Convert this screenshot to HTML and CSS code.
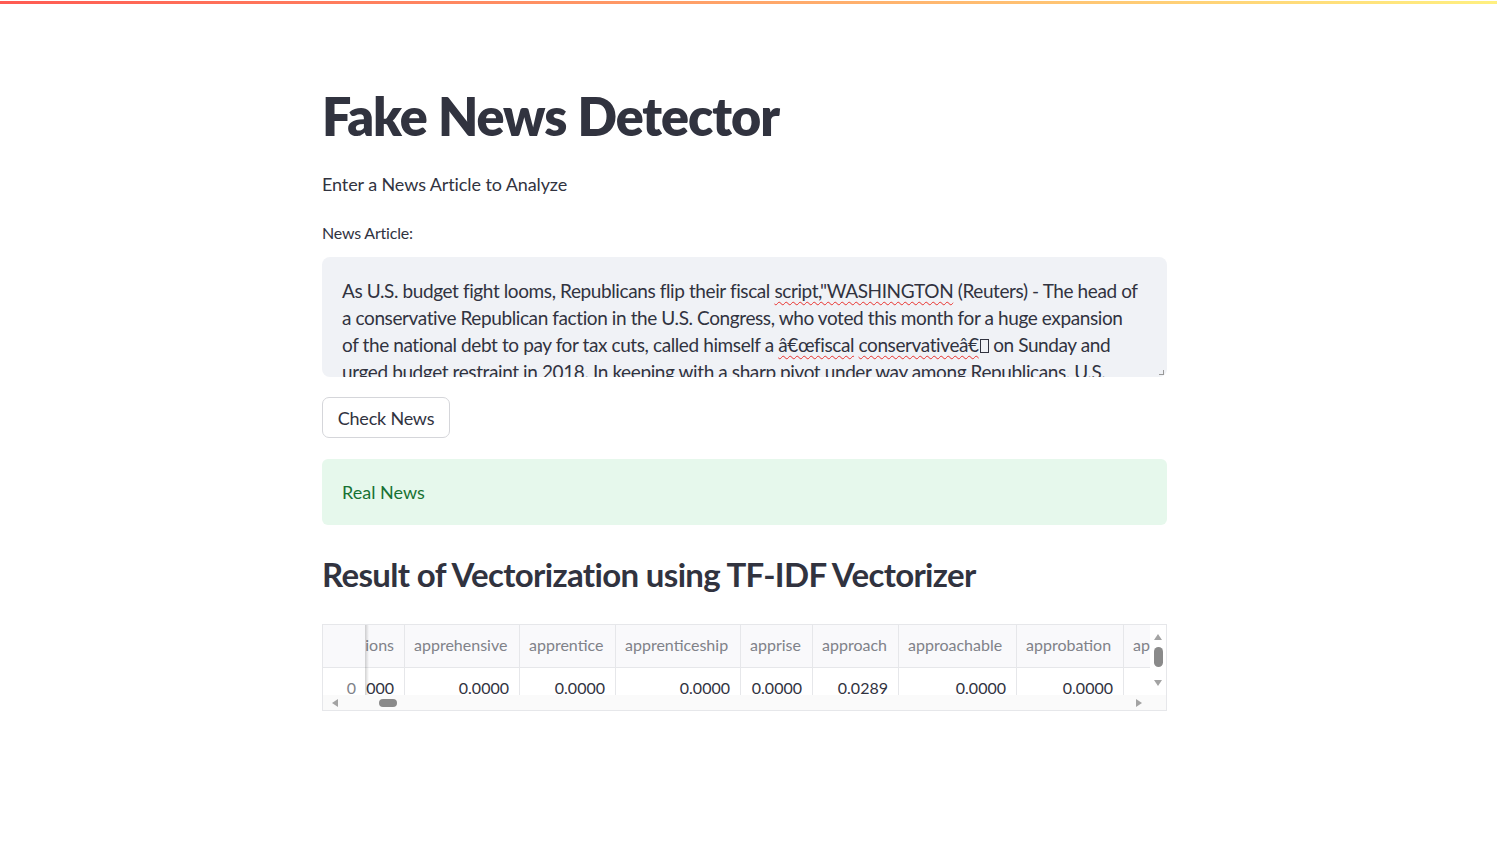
FILE: index.html
```html
<!DOCTYPE html>
<html lang="en">
<head>
<meta charset="utf-8">
<title>Fake News Detector</title>
<link rel="stylesheet" href="styles.css">
</head>
<body>
<div class="decoration"></div>
<main class="main">
  <h1 class="title">Fake News Detector</h1>
  <p class="subtitle">Enter a News Article to Analyze</p>
  <label class="label">News Article:</label>
  <div class="textarea">
    <div class="ta-text">As U.S. budget fight looms, Republicans flip their fiscal <span class="spell">script,"WASHINGTON</span> (Reuters) - The head of<br>a conservative Republican faction in the U.S. Congress, who voted this month for a huge expansion<br>of the national debt to pay for tax cuts, called himself a <span class="spell">â€œfiscal</span> <span class="spell">conservativeâ€</span><span class="missing">&#x9d;</span> on Sunday and<br>urged budget restraint in 2018. In keeping with a sharp pivot under way among Republicans, U.S.</div>
    <span class="resize"></span>
  </div>
  <div class="btn-row"><button class="btn">Check News</button></div>
  <div class="alert">Real News</div>
  <h2 class="h2">Result of Vectorization using TF-IDF Vectorizer</h2>
  <div class="grid">
    <div class="grid-body">
      <div class="row head">
        <div class="cell idx"></div>
        <div class="cell partial"><span>apprehensions</span></div>
        <div class="cell w1">apprehensive</div>
        <div class="cell w2">apprentice</div>
        <div class="cell w3">apprenticeship</div>
        <div class="cell w4">apprise</div>
        <div class="cell w5">approach</div>
        <div class="cell w6">approachable</div>
        <div class="cell w7">approbation</div>
        <div class="cell w8">approval</div>
      </div>
      <div class="row data">
        <div class="cell idx">0</div>
        <div class="cell partial num"><span>0.0000</span></div>
        <div class="cell w1 num">0.0000</div>
        <div class="cell w2 num">0.0000</div>
        <div class="cell w3 num">0.0000</div>
        <div class="cell w4 num">0.0000</div>
        <div class="cell w5 num">0.0289</div>
        <div class="cell w6 num">0.0000</div>
        <div class="cell w7 num">0.0000</div>
        <div class="cell w8 num">0.0000</div>
      </div>
      <div class="shadow"></div>
      <div class="vscroll">
        <span class="arrow up"></span>
        <span class="vthumb"></span>
        <span class="arrow down"></span>
      </div>
    </div>
    <div class="hscroll">
      <span class="arrow left"></span>
      <span class="hthumb"></span>
      <span class="hspace"></span>
      <span class="arrow right"></span>
    </div>
  </div>
</main>
</body>
</html>
```
FILE: styles.css
```css
* { box-sizing: border-box; }
html, body { margin: 0; padding: 0; background: #ffffff; }
body {
  font-family: Lato, "Noto Sans", sans-serif;
  color: #31333f;
  width: 1497px;
  height: 842px;
  overflow: hidden;
}
.decoration {
  height: 3px;
  margin-top: 1px;
  background: linear-gradient(90deg, #ff5a52, #ffb46e 60%, #fff080);
}
.main {
  width: 845px;
  margin-left: calc(50% - 426.5px);
  display: flex;
  flex-direction: column;
}
.title {
  margin: 77px 0 0;
  font-size: 52px;
  font-weight: 800;
  line-height: 70px;
  letter-spacing: -1px;
  color: #31333f;
}
.subtitle {
  margin: 20px 0 0;
  font-size: 18px;
  line-height: 26px;
  letter-spacing: -0.1px;
}
.label {
  margin-top: 26px;
  font-size: 16px;
  line-height: 20px;
  letter-spacing: -0.2px;
}
.textarea {
  position: relative;
  margin-top: 14px;
  height: 120px;
  background: #f0f2f6;
  border-radius: 8px;
  padding: 20px 20px 0;
  overflow: hidden;
}
.ta-text {
  font-size: 19px;
  line-height: 27px;
  white-space: nowrap;
  letter-spacing: -0.4px;
}
.spell {
  text-decoration: underline wavy #e8302c;
  text-decoration-thickness: 1px;
  text-underline-offset: 3px;
}
.missing {
  display: inline-block;
  width: 9px;
  height: 14px;
  overflow: hidden;
  border: 1px solid #31333f;
  vertical-align: -1px;
  margin-left: 1px;
  font-size: 8px;
  line-height: 12px;
}
.resize {
  position: absolute;
  right: 3px;
  bottom: 2px;
  width: 5px;
  height: 5px;
  border-right: 1px solid #999;
  border-bottom: 1px solid #999;
}
.btn-row { margin-top: 20px; display: flex; }
.btn {
  height: 41px;
  width: 128px;
  background: #ffffff;
  border: 1px solid #d5d6da;
  border-radius: 7px;
  font-family: inherit;
  font-size: 18px;
  letter-spacing: -0.2px;
  color: #31333f;
  padding: 0;
}
.alert {
  margin-top: 21px;
  height: 66px;
  background: #e6f8ec;
  border-radius: 6px;
  color: #177233;
  font-size: 18px;
  padding: 0 20px;
  display: flex;
  align-items: center;
}
.h2 {
  margin: 29px 0 0;
  font-size: 33px;
  font-weight: 700;
  line-height: 40px;
  letter-spacing: -0.65px;
  color: #31333f;
}
.grid {
  margin-top: 30px;
  width: 845px;
  border: 1px solid #e6e7ea;
  display: flex;
  flex-direction: column;
}
.grid-body {
  position: relative;
  height: 70px;
  overflow: hidden;
}
.row {
  display: flex;
  white-space: nowrap;
  font-size: 16px;
}
.row.head {
  height: 43px;
  background: #f9f9fb;
  color: #808289;
  border-bottom: 1px solid #e6e7ea;
}
.row.head .cell { padding-bottom: 3px; }
.row.data {
  height: 27px;
  color: #31333f;
}
.cell {
  flex: none;
  border-right: 1px solid #e6e7ea;
  display: flex;
  align-items: center;
  padding: 0 10px 0 9px;
  overflow: hidden;
}
.row.data .cell { align-items: flex-start; padding-top: 10px; line-height: 20px; }
.cell.num { justify-content: flex-end; padding-right: 10px; }
.cell.idx {
  width: 43px;
  justify-content: flex-end;
  padding-right: 10px;
  color: #808289;
  border-right: none;
}
.cell.partial {
  width: 39px;
  justify-content: flex-end;
  padding: 0 10px 0 0;
}
.row.data .cell.partial { padding-right: 10px; }
.w1 { width: 115px; }
.w2 { width: 96px; }
.w3 { width: 125px; }
.w4 { width: 72px; }
.w5 { width: 86px; }
.w6 { width: 118px; }
.w7 { width: 107px; }
.w8 { width: 110px; }
.shadow {
  position: absolute;
  left: 42px;
  top: 0;
  bottom: 0;
  width: 4px;
  background: linear-gradient(90deg, rgba(0,0,0,0.18), rgba(0,0,0,0));
}
.vscroll {
  position: absolute;
  right: 0;
  top: 0;
  bottom: 0;
  width: 16px;
  background: #ffffff;
  display: flex;
  flex-direction: column;
  align-items: center;
  padding-top: 9px;
}
.arrow { width: 0; height: 0; display: block; }
.arrow.up { border-left: 4px solid transparent; border-right: 4px solid transparent; border-bottom: 6px solid #a3a3a3; }
.arrow.down { border-left: 4px solid transparent; border-right: 4px solid transparent; border-top: 6px solid #a3a3a3; margin-top: 13px; }
.vthumb { width: 9px; height: 20px; border-radius: 5px; background: #8a8a8a; margin-top: 7px; }
.hscroll {
  height: 15px;
  background: #fafafa;
  display: flex;
  align-items: center;
  padding: 0 24px 0 9px;
}
.arrow.left { border-top: 4px solid transparent; border-bottom: 4px solid transparent; border-right: 6px solid #a3a3a3; }
.arrow.right { border-top: 4px solid transparent; border-bottom: 4px solid transparent; border-left: 6px solid #a3a3a3; }
.hthumb { width: 18px; height: 8px; border-radius: 5px; background: #8a8a8a; margin-left: 41px; }
.hspace { flex: 1; }
```
